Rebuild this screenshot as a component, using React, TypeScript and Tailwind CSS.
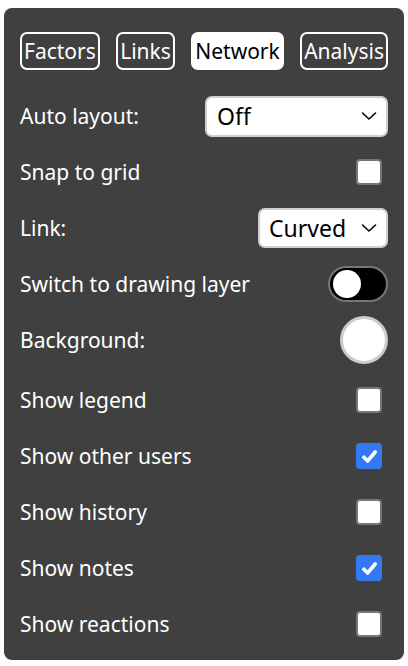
import { useState } from "react";

function Checkbox({ checked }: { checked: boolean }) {
  if (checked) {
    return (
      <div className="flex h-[26px] w-[26px] items-center justify-center rounded-[4px] bg-[#3478f6]">
        <svg width="19" height="19" viewBox="0 0 16 16" fill="none">
          <path d="M3.2 8.6l3.2 3.2L12.8 4.2" stroke="white" strokeWidth="3" strokeLinecap="round" strokeLinejoin="round" />
        </svg>
      </div>
    );
  }
  return <div className="h-[26px] w-[26px] rounded-[4px] border-2 border-[#767676] bg-white" />;
}

function Chevron() {
  return (
    <svg width="16" height="10" viewBox="0 0 16 10" fill="none">
      <path d="M1.5 2l6.5 6 6.5-6" stroke="black" strokeWidth="1.6" strokeLinecap="round" strokeLinejoin="round" />
    </svg>
  );
}

function Row({ label, children, className = "" }: { label: string; children: React.ReactNode; className?: string }) {
  return (
    <div className={"flex h-14 items-center justify-between " + className}>
      <span className="pt-[2px]">{label}</span>
      {children}
    </div>
  );
}

export default function App() {
  const [tab] = useState("Network");
  const tabs = ["Factors", "Links", "Network", "Analysis"];
  const checks: [string, boolean][] = [
    ["Show legend", false],
    ["Show other users", true],
    ["Show history", false],
    ["Show notes", true],
    ["Show reactions", false],
  ];

  return (
    <div className="min-h-[666px] bg-white px-1 pt-2 font-['Noto_Sans',sans-serif]">
      <div className="rounded-lg bg-[#404040] px-4 pb-2 pt-6 text-[21px] text-white">
        {/* tabs */}
        <div className="mb-[18px] flex justify-between">
          {tabs.map((t) => (
            <div
              key={t}
              className={
                "flex h-[38px] items-center rounded-[7px] border-2 px-[2px] text-[21px] leading-none " +
                (t === tab ? "border-white bg-white text-black" : "border-white text-white")
              }
            >
              {t}
            </div>
          ))}
        </div>

        <Row label="Auto layout:">
          <div className="flex h-[41px] w-[183px] items-center justify-between rounded-[7px] border-2 border-[#cfcfcf] bg-white pl-[10px] pr-[9px] text-[23px] text-black">
            <span>Off</span>
            <Chevron />
          </div>
        </Row>

        <Row label="Snap to grid">
          <div className="mr-[6px]">
            <Checkbox checked={false} />
          </div>
        </Row>

        <Row label="Link:">
          <div className="flex h-[40px] w-[130px] items-center justify-between rounded-[7px] border-2 border-[#cfcfcf] bg-white pl-[9px] pr-[9px] text-[23px] text-black">
            <span>Curved</span>
            <Chevron />
          </div>
        </Row>

        <Row label="Switch to drawing layer">
          <div className="flex h-[36px] w-[60px] items-center rounded-full border-2 border-[#767676] bg-black px-[3px]">
            <div className="h-[28px] w-[28px] rounded-full bg-white" />
          </div>
        </Row>

        <Row label="Background:">
          <div className="h-[48px] w-[48px] rounded-full border-[3px] border-[#cccccc] bg-white" />
        </Row>

        <div className="mt-1">
          {checks.map(([label, on]) => (
            <Row key={label} label={label}>
              <div className="mr-[6px]">
                <Checkbox checked={on} />
              </div>
            </Row>
          ))}
        </div>
      </div>
    </div>
  );
}
